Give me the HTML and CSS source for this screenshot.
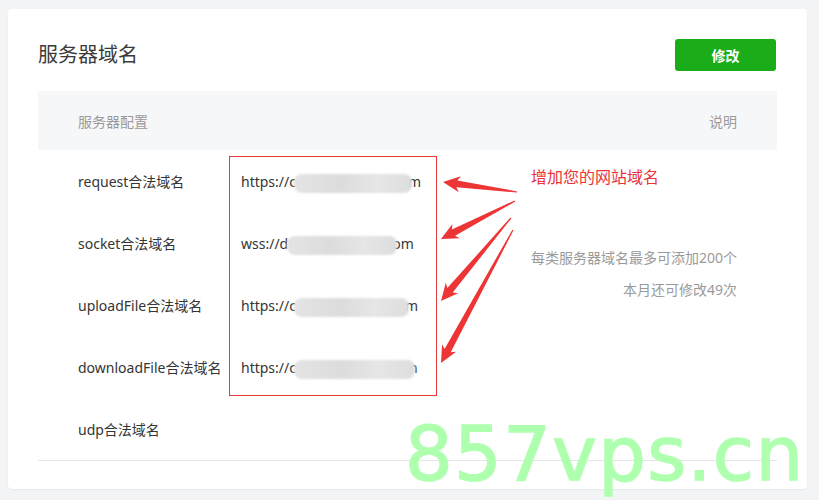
FILE: index.html
```html
<!DOCTYPE html>
<html lang="zh-CN">
<head>
    <meta charset="UTF-8">
    <meta name="viewport" content="width=device-width, initial-scale=1.0">
    <title>服务器域名</title>
    <link rel="stylesheet" href="styles.css">
</head>
<body>
    <div class="card">
        <div class="card-head">
            <h2>服务器域名</h2>
            <button class="btn-primary">修改</button>
        </div>

        <div class="domain-table">
            <div class="table-head">
                <span>服务器配置</span>
                <span>说明</span>
            </div>
            <div class="table-body">
                <div class="label">request合法域名</div>
                <div class="value">https://c<span class="mask m1"></span>m</div>
                <div class="desc">
                    <p>每类服务器域名最多可添加200个</p>
                    <p>本月还可修改49次</p>
                </div>

                <div class="label">socket合法域名</div>
                <div class="value">wss://d<span class="mask m2"></span>om</div>

                <div class="label">uploadFile合法域名</div>
                <div class="value">https://c<span class="mask m3"></span>m</div>

                <div class="label">downloadFile合法域名</div>
                <div class="value">https://c<span class="mask m4"></span>n</div>

                <div class="label">udp合法域名</div>
                <div class="value"></div>
                <div class="empty"></div>
            </div>
        </div>
    </div>

    <!-- annotations drawn over the screenshot -->
    <div class="mark-box"></div>
    <div class="mark-text">增加您的网站域名</div>
    <svg class="arrows" width="819" height="500" viewBox="0 0 819 500">
        <g fill="#ee3535">
            <polygon transform="translate(443 182) rotate(7.7)" points="0,0 17,-8 14,-3.5 74.7,-0.6 74.7,0.6 14,3.5 17,8"/>
            <polygon transform="translate(441 239) rotate(-27.2)" points="0,0 17,-8 14,-3.5 83.2,-0.6 83.2,0.6 14,3.5 17,8"/>
            <polygon transform="translate(441 301) rotate(-49.9)" points="0,0 17,-8 14,-3.5 108.6,-0.6 108.6,0.6 14,3.5 17,8"/>
            <polygon transform="translate(441 363) rotate(-61.6)" points="0,0 17,-8 14,-3.5 151.2,-0.6 151.2,0.6 14,3.5 17,8"/>
        </g>
    </svg>
    <div class="watermark">857vps.cn</div>
</body>
</html>
```

FILE: styles.css
```css
* {
    margin: 0;
    padding: 0;
    box-sizing: border-box;
}

body {
    font-family: "Noto Sans", "Noto Sans CJK SC", sans-serif;
    background: #f3f4f6;
    color: #353535;
    width: 819px;
    height: 500px;
    overflow: hidden;
    padding-top: 9px;
}

.card {
    background: #fff;
    border-radius: 4px;
    margin: 0 12px 0 8px;
    padding: 30px 30px 28px;
    box-shadow: 0 1px 2px rgba(0, 0, 0, 0.06);
}

.card-head {
    display: flex;
    justify-content: space-between;
    align-items: center;
    height: 32px;
    margin-bottom: 20px;
}

.card-head h2 {
    font-size: 20px;
    font-weight: normal;
    color: #3a3a3a;
    line-height: 32px;
}

.btn-primary {
    width: 101px;
    height: 32px;
    background: #1aad19;
    border: none;
    border-radius: 3px;
    color: #fff;
    font-family: inherit;
    font-size: 14px;
    font-weight: bold;
    margin-right: 1px;
}

.table-head {
    display: flex;
    justify-content: space-between;
    align-items: center;
    height: 59px;
    padding: 0 40px;
    background: #f6f7f9;
    color: #9a9a9a;
    font-size: 14px;
}

.table-body {
    display: grid;
    grid-template-columns: 191px 208px 1fr;
    grid-auto-rows: 62px;
    border-bottom: 1px solid #e5e5e5;
    font-size: 14px;
}

.label {
    display: flex;
    align-items: center;
    padding-left: 40px;
    white-space: nowrap;
}

.value {
    display: flex;
    align-items: center;
    padding-left: 12px;
    white-space: nowrap;
}

.mask {
    display: inline-block;
    position: relative;
    z-index: 1;
    height: 19px;
    margin-top: 4px;
    background: linear-gradient(90deg, #e4e4e4 0%, #dcdcdc 40%, #e6e6e6 70%, #dddddd 100%);
    border-radius: 8px;
    filter: blur(1px);
}

.m1 { width: 118px; margin-left: -2px; margin-right: -4px; }
.m2 { width: 110px; margin-left: -1px; margin-right: -5px; }
.m3 { width: 115px; margin-left: -2px; margin-right: -4px; }
.m4 { width: 121px; margin-left: -2px; margin-right: -6px; }

.desc {
    grid-column: 3;
    grid-row: 1 / span 4;
    display: flex;
    flex-direction: column;
    justify-content: center;
    align-items: flex-end;
    gap: 10px;
    padding-right: 40px;
    color: #9a9a9a;
    font-size: 14px;
    line-height: 22px;
}

.mark-box {
    position: absolute;
    left: 229px;
    top: 156px;
    width: 208px;
    height: 240px;
    border: 1px solid #e23b3b;
}

.mark-text {
    position: absolute;
    left: 531px;
    top: 166px;
    color: #e8353b;
    font-size: 16px;
    line-height: 22px;
}

.arrows {
    position: absolute;
    left: 0;
    top: 0;
    pointer-events: none;
}

.watermark {
    position: absolute;
    left: 405px;
    top: 417px;
    font-family: "DejaVu Sans", sans-serif;
    font-weight: normal;
    font-size: 75px;
    line-height: 1;
    letter-spacing: 1.4px;
    color: #aeffae;
    -webkit-text-stroke: 1.5px #aeffae;
    white-space: nowrap;
}
```
